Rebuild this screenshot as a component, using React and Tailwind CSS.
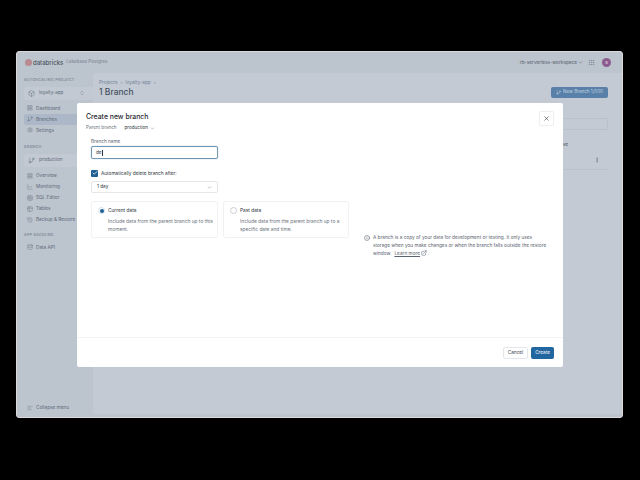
import { ChevronDown, ChevronsUpDown, LayoutGrid, GitBranch, Settings, LineChart, Table, Table2, History, Database, X, Info, ExternalLink, Grip, MoreVertical, AlignLeft, Box, Check } from "lucide-react";

function NavItem({ icon: Icon, label, active }) {
  return (
    <div className={"flex h-[11px] items-center gap-[3px] rounded-[2px] pl-[3px] text-[4.7px] whitespace-nowrap text-[#5d6a7a] " + (active ? "bg-[#acb8c8]" : "")}>
      <Icon size={6} strokeWidth={1.6} className="shrink-0 text-[#6b7685]" />
      <span>{label}</span>
    </div>
  );
}

function DataCard({ title, text, selected, className }) {
  return (
    <div className={"flex h-[37px] gap-[3px] rounded-[2px] border border-[#f1f2f4] pr-[4px] pl-[6px] pt-[4px] " + className}>
      <div className={"mt-[1px] flex h-[7px] w-[7px] shrink-0 items-center justify-center rounded-full border " + (selected ? "border-[#cfe0ee]" : "border-[#c9ced4]")}>
        {selected && <div className="h-[4px] w-[4px] rounded-full bg-[#1f5f93]" />}
      </div>
      <div>
        <div className="text-[4.8px] leading-[9px] text-[#2c3540]">{title}</div>
        <div className="mt-[3px] text-[4.85px] leading-[7.5px] text-[#6b7480]">{text}</div>
      </div>
    </div>
  );
}

function Dialog() {
  return (
    <div className="absolute left-[60px] top-[51px] flex h-[264px] w-[486px] flex-col rounded-[2px] bg-white">
      <div className="relative flex-1 px-[9px] pt-[8px]">
        <div className="text-[6.9px] leading-[11px] font-medium text-[#1f2730]">Create new branch</div>
        <div className="mt-[2px] flex items-center text-[4.6px] leading-[8px] text-[#6b7480]">
          <span>Parent branch</span>
          <span className="ml-[8px] text-[#2c3540]">production</span>
          <ChevronDown size={5} className="ml-[2px] text-[#6b7480]" />
        </div>
        <button className="absolute right-[9px] top-[8px] flex h-[15px] w-[15px] items-center justify-center rounded-[2px] border border-[#eceef0] bg-white">
          <X size={7} strokeWidth={2} className="text-[#2c3540]" />
        </button>

        <div className="ml-[5px] w-[127px]">
          <div className="mt-[5px] text-[4.7px] leading-[8px] text-[#5b6470]">Branch name</div>
          <div className="mt-[1px] flex h-[13px] items-center rounded-[2px] border border-[#6f97b5] px-[4px] text-[4.7px] text-[#2c3540] shadow-[0_0_1px_#6f97b5]">
            de<span className="h-[6px] w-px bg-[#2c3540]" />
          </div>
          <div className="mt-[10px] flex items-center gap-[3px]">
            <div className="flex h-[7px] w-[7px] items-center justify-center rounded-[1px] bg-[#1f5f93]">
              <Check size={6} strokeWidth={3} className="text-white" />
            </div>
            <span className="text-[4.75px] leading-[8px] text-[#2c3540]">Automatically delete branch after:</span>
          </div>
          <div className="mt-[4px] flex h-[12px] items-center justify-between rounded-[2px] border border-[#e4e6e9] px-[5px] text-[4.7px] text-[#2c3540]">
            <span>1 day</span>
            <ChevronDown size={5} className="text-[#6b7480]" />
          </div>
        </div>

        <div className="mt-[8px] ml-[5px] flex gap-[5px]">
          <DataCard className="w-[127px]" selected title="Current data" text="Include data from the parent branch up to this moment." />
          <DataCard className="w-[126px]" title="Past data" text="Include data from the parent branch up to a specific date and time." />
        </div>
        <div className="absolute left-[287px] top-[130px] flex w-[183px] gap-[3px]">
          <Info size={6} strokeWidth={2} className="mt-[2px] shrink-0 text-[#4a5460]" />
          <div className="text-[4.75px] leading-[8px] text-[#5b6470]">
            <div>A branch is a copy of your data for development or testing. It only uses storage when you make changes or when the branch falls outside the restore</div>
            <div className="flex items-center">
              <span className="mr-[3px]">window.</span>
              <span className="mr-[1px] underline">Learn more</span>
              <ExternalLink size={6} />
              <span className="ml-[1px]">.</span>
            </div>
          </div>
        </div>
      </div>
      <div className="flex h-[30px] shrink-0 items-center justify-end gap-[3px] border-t border-[#f3f4f5] pr-[9px]">
        <button className="flex h-[12px] w-[25px] items-center justify-center rounded-[2px] border border-[#e4e6e9] bg-white text-[4.7px] text-[#3a434e]">Cancel</button>
        <button className="flex h-[12px] w-[23px] items-center justify-center rounded-[2px] bg-[#22669f] text-[4.7px] text-white">Create</button>
      </div>
    </div>
  );
}

export default function App() {
  return (
    <div className="h-[480px] w-[640px] overflow-hidden bg-black pl-[16px] pt-[51px] font-['Inter','Liberation_Sans',sans-serif]">
      <div className="relative flex h-[367px] w-[607px] flex-col overflow-hidden rounded-[3px] border border-[#dcd8dc] bg-[#bcc4ce]">
        <div className="flex h-[21px] shrink-0 items-center pl-[8px] pr-[11px]">
          <div className="h-[7px] w-[7px] rounded-full bg-[#b98a8f]" />
          <span className="ml-[1px] text-[6px] font-medium text-[#4c5560]">databricks</span>
          <span className="ml-[3px] text-[4.6px] text-[#77818e]">Lakebase Postgres</span>
          <span className="ml-auto text-[4.75px] text-[#57616e]">rb-serverless-workspace</span>
          <ChevronDown size={5} className="ml-[1px] text-[#57616e]" />
          <Grip size={7} strokeWidth={1.4} className="ml-[5px] text-[#6d7a8c]" />
          <div className="ml-[7px] flex h-[9px] w-[9px] items-center justify-center rounded-full bg-[#8d5c8e] text-[4px] text-white">S</div>
        </div>
        <div className="flex min-h-0 flex-1">
          <div className="flex w-[76px] shrink-0 flex-col pl-[7px]">
            <div className="mt-[4px] text-[3.7px] font-medium tracking-[0.3px] whitespace-nowrap text-[#77818e]">AUTOSCALING PROJECT</div>
            <div className="mt-[4px] flex h-[13px] items-center gap-[4px] rounded-[2px] bg-[#c2c9d2] px-[4px] text-[4.6px] text-[#5d6a7a]">
              <Box size={7} strokeWidth={1.4} />
              <span>loyalty-app</span>
              <ChevronsUpDown size={6} strokeWidth={1.4} className="ml-auto mr-[4px]" />
            </div>
            <div className="mt-[3px]">
              <NavItem icon={LayoutGrid} label="Dashboard" />
              <NavItem icon={GitBranch} label="Branches" active />
              <NavItem icon={Settings} label="Settings" />
            </div>
            <div className="mt-[8px] text-[3.7px] font-medium tracking-[0.3px] text-[#77818e]">BRANCH</div>
            <div className="mt-[5px] flex h-[13px] items-center gap-[4px] rounded-[2px] bg-[#c2c9d2] px-[4px] text-[4.6px] text-[#5d6a7a]">
              <GitBranch size={7} strokeWidth={1.4} />
              <span>production</span>
            </div>
            <div className="mt-[3px]">
              <NavItem icon={LayoutGrid} label="Overview" />
              <NavItem icon={LineChart} label="Monitoring" />
              <NavItem icon={Table} label="SQL Editor" />
              <NavItem icon={Table2} label="Tables" />
              <NavItem icon={History} label="Backup & Restore" />
            </div>
            <div className="mt-[7px] text-[3.7px] font-medium tracking-[0.3px] text-[#77818e]">APP BACKEND</div>
            <div className="mt-[4px]">
              <NavItem icon={Database} label="Data API" />
            </div>
            <div className="mt-auto mb-[4px]">
              <NavItem icon={AlignLeft} label="Collapse menu" />
            </div>
          </div>
          <div className="mb-[3px] flex-1 rounded-tl-[3px] bg-[#c3cad3] pl-[6px] pr-[14px] pt-[6px]">
            <div className="flex items-center gap-[3px] text-[4.8px] text-[#73839b]">
              <span>Projects</span><span>›</span><span>loyalty-app</span><span>›</span>
            </div>
            <div className="flex items-center justify-between">
              <span className="text-[8.5px] font-medium text-[#465162]">1 Branch</span>
              <button className="flex h-[11px] w-[57px] items-center justify-center gap-[2px] rounded-[2px] bg-[#5880a8] text-[4.6px] text-[#c3d2e2]">
                <GitBranch size={5} /> New Branch 1/500
              </button>
            </div>
            <div className="mt-[19px] h-[12px] rounded-[1px] border border-[#b8c0ca]" />
            <div className="mt-[10px] pr-[40px] text-right text-[4.7px] leading-[8px] text-[#465162]">Active</div>
            <div className="mt-[3px] flex h-[19px] items-center justify-end border-b border-[#b8c0ca] pr-[8px]">
              <MoreVertical size={6} className="text-[#56616f]" />
            </div>
          </div>
        </div>
        <Dialog />
      </div>
    </div>
  );
}
